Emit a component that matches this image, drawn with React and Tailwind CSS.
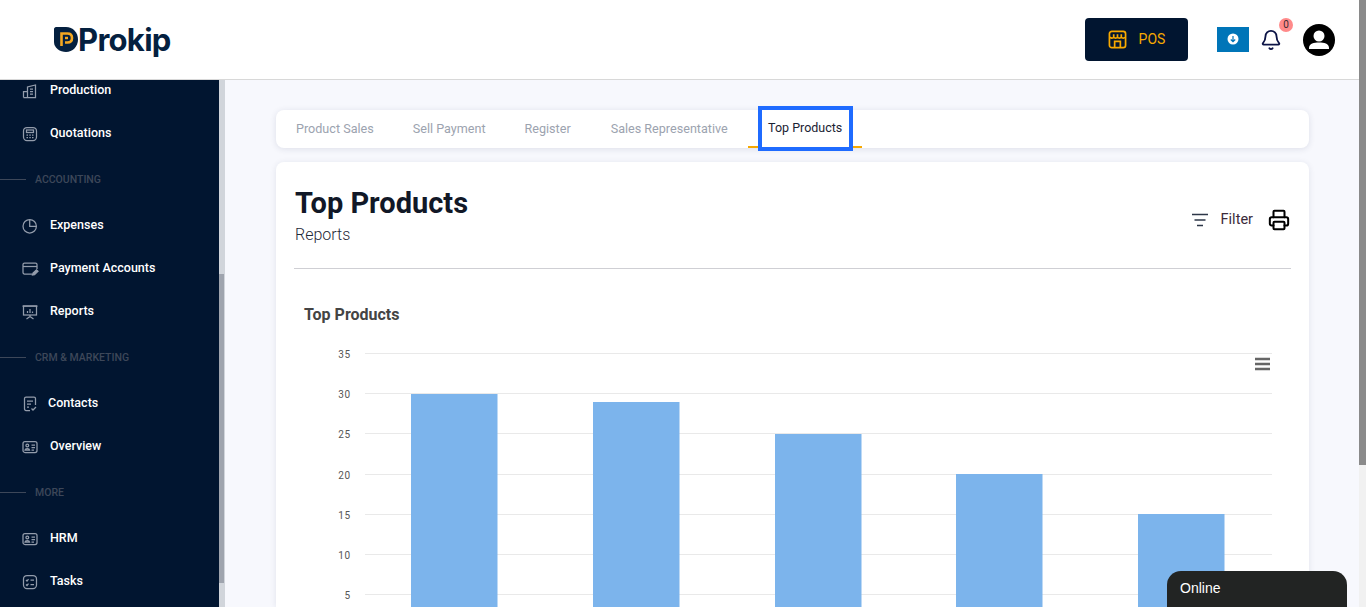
import React from 'react';
import { Bell, Printer } from 'lucide-react';

const ROBOTO = "font-['Roboto',sans-serif]";

const Icon = ({ children }) => (
  <svg width="18" height="18" viewBox="0 0 18 18" fill="none" stroke="#939cab" strokeWidth="1.25" className="shrink-0">
    {children}
  </svg>
);

const ProductionIcon = () => (
  <Icon>
    <path d="M2.5 15.5V9.5H6.5V15.5M6.5 15.5V5L14.5 3V15.5H2.5M9 7H12M9 9.5H12M9 12H12" />
  </Icon>
);
const CalcIcon = () => (
  <Icon>
    <rect x="2.5" y="2.5" width="13" height="13" rx="3.5" />
    <rect x="5.5" y="5" width="7" height="2.5" />
    <path d="M5.5 10H7M8.3 10H9.8M11 10H12.5M5.5 12.5H7M8.3 12.5H9.8M11 12.5H12.5" />
  </Icon>
);
const PieIcon = () => (
  <Icon>
    <circle cx="8.7" cy="9.3" r="6.7" />
    <path d="M8.7 2.6V9.3H15.4" />
  </Icon>
);
const CardIcon = () => (
  <Icon>
    <path d="M11 14H3.5A1.5 1.5 0 0 1 2 12.5V4.5A1.5 1.5 0 0 1 3.5 3H14.5A1.5 1.5 0 0 1 16 4.5V9" />
    <path d="M2 6.5H16" />
    <path d="M11.5 15L12 13L15.5 9.8L17 11.2L13.5 14.6Z" fill="#939cab" />
  </Icon>
);
const BoardIcon = () => (
  <Icon>
    <rect x="2.5" y="3" width="13" height="9" />
    <path d="M1.5 3H16.5M9 12V14M5.5 16L9 13.5L12.5 16M6.5 10V8M9 10V6M11.5 10V8.5" />
  </Icon>
);
const NoteIcon = () => (
  <Icon>
    <path d="M9 15.5H5A1.5 1.5 0 0 1 3.5 14V3.5A1.5 1.5 0 0 1 5 2H13A1.5 1.5 0 0 1 14.5 3.5V10" />
    <path d="M6 6H12M6 9H10M6 12H8M10.5 13.5L12 15L15 12" />
  </Icon>
);
const IdIcon = () => (
  <Icon>
    <rect x="2" y="3.5" width="14" height="11" rx="2" />
    <circle cx="6.3" cy="7.5" r="1.4" />
    <path d="M4 12C4.3 10 8.3 10 8.6 12H4ZM10.5 7H14M10.5 9.5H14M10.5 12H13" />
  </Icon>
);
const TasksIcon = () => (
  <Icon>
    <rect x="2.5" y="2.5" width="13" height="13" rx="3.5" />
    <path d="M5 7L6 8L7.5 6M5 11.5L6 12.5L7.5 10.5M9.5 7H13M9.5 11.5H13" />
  </Icon>
);

const NavItem = ({ icon, label, gap = 'gap-[11px]' }) => (
  <div className={`h-[43px] pl-[21px] flex items-center ${gap} text-[12.5px] font-medium text-white`}>
    {icon}
    <span>{label}</span>
  </div>
);

const NavSection = ({ label }) => (
  <div className="h-[49px] flex items-center gap-[9px] text-[10.5px] font-medium text-[#3d4759]">
    <div className="w-[26px] h-px bg-[#3d4759]" />
    <span>{label}</span>
  </div>
);

const Sidebar = () => (
  <div className="w-[225px] shrink-0 flex overflow-hidden bg-[#011530]">
    <div className="w-[219px] shrink-0 -mt-[11px]">
      <NavItem icon={<ProductionIcon />} label="Production" />
      <NavItem icon={<CalcIcon />} label="Quotations" />
      <NavSection label="ACCOUNTING" />
      <NavItem icon={<PieIcon />} label="Expenses" />
      <NavItem icon={<CardIcon />} label="Payment Accounts" />
      <NavItem icon={<BoardIcon />} label="Reports" />
      <NavSection label="CRM & MARKETING" />
      <NavItem icon={<NoteIcon />} label="Contacts" gap="gap-[9px]" />
      <NavItem icon={<IdIcon />} label="Overview" />
      <NavSection label="MORE" />
      <NavItem icon={<IdIcon />} label="HRM" />
      <NavItem icon={<TasksIcon />} label="Tasks" />
    </div>
    <div className="w-[6px] bg-[#d1d5db] pt-[194px]">
      <div className="h-[309px] w-[5px] bg-[#9fa4ae]" />
    </div>
  </div>
);

const Logo = () => (
  <div className="flex items-center">
    <svg width="24" height="25" viewBox="0 0 24 25" className="shrink-0">
      <path d="M2 0H12C19 0 24 5.5 24 12.5C24 19.5 18.5 25 12 25C6 25 0 21 0 15V2C0 1 1 0 2 0Z" fill="#04203f" />
      <path d="M7.5 19V6.5H13.5C16.5 6.5 18 8.5 18 11C18 13.5 16.5 15.5 13.5 15.5H11" fill="none" stroke="#f4a821" strokeWidth="2.6" />
      <path d="M11 11H14" stroke="#f4a821" strokeWidth="2.4" />
    </svg>
    <span className="text-[31px] leading-none font-bold tracking-[-0.7px] text-[#04203f] font-['Inter',sans-serif]">Prokip</span>
  </div>
);

const Header = () => (
  <div className="h-[80px] shrink-0 bg-white border-b border-[#d8d8d8] flex items-center pl-[54px]">
    <Logo />
    <div className="ml-auto flex items-center">
      <div className="w-[103px] h-[43px] bg-[#011530] rounded-[4px] flex items-center justify-center gap-[12px] text-[14px] text-[#f7a900] mr-[1px]">
        <svg width="19" height="19" viewBox="0 0 20 20" fill="none" stroke="#f7a900" strokeWidth="1.8">
          <rect x="1.5" y="1.5" width="17" height="17" rx="2.5" />
          <path d="M2 7.5C3.5 9 5 9 6 7.5C7 9 9 9 10 7.5C11 9 13 9 14 7.5C15 9 17 9 18 7.5M6 4.5V7M10 4.5V7M14 4.5V7M7 18V12H13V18" />
        </svg>
        <span>POS</span>
      </div>
      <div className="w-[32px] h-[25px] ml-[28px] bg-[#0075b8] flex items-center justify-center -mt-[1px]">
        <svg width="12" height="12" viewBox="0 0 12 12">
          <circle cx="6" cy="6" r="5.5" fill="#fff" />
          <path d="M6 3V8.5M3.8 6.5L6 8.7L8.2 6.5" fill="none" stroke="#0075b8" strokeWidth="1.2" />
        </svg>
      </div>
      <div className="relative ml-[11px] mt-[1px]">
        <Bell size={22} color="#0c1446" strokeWidth={2} />
        <span className="absolute -top-[11px] left-[19px] w-[14px] h-[14px] rounded-full bg-[#ff8a8a] text-[10px] leading-[14px] text-center text-[#3a2a30]">0</span>
      </div>
      <div className="w-[32px] h-[32px] ml-[21px] mr-[24px] rounded-full bg-black overflow-hidden">
        <svg width="32" height="32" viewBox="0 0 32 32" fill="#fff">
          <circle cx="16" cy="12" r="5.5" />
          <path d="M6 24C6 19.5 11 18.5 16 18.5C21 18.5 26 19.5 26 24V25H6Z" />
        </svg>
      </div>
    </div>
  </div>
);

const Tabs = () => (
  <div className="h-[38px] bg-white rounded-[8px] shadow-[0_1px_6px_rgba(30,40,80,0.12)] flex items-center pl-[20px] text-[12.6px] text-[#9ca3af]">
    <span>Product Sales</span>
    <span className="ml-[39px]">Sell Payment</span>
    <span className="ml-[39px]">Register</span>
    <span className="ml-[40px]">Sales Representative</span>
    <div className="relative ml-[20px] w-[114px] h-[38px] border-b-2 border-[#f7a900]">
      <span className="absolute -top-[4px] left-[10px] w-[95px] h-[45px] border-[4px] border-[#1f6bff] bg-white flex items-center justify-center text-[12.5px] text-[#1a2233] pb-[1px]">Top Products</span>
    </div>
  </div>
);

const ticks = [35, 30, 25, 20, 15, 10, 5];
const bars = [
  { x: 411, top: 394 },
  { x: 593, top: 402 },
  { x: 775, top: 434 },
  { x: 956, top: 474 },
  { x: 1138, top: 514 },
];

// viewBox uses the page's own coordinates, the chart sits right below its title
const Chart = () => (
  <svg width="1033" height="282" viewBox="276 325 1033 282" className="block">
    {ticks.map((t, i) => {
      const y = Math.round(353 + i * 40.2);
      return (
        <g key={t}>
          <line x1="365" x2="1272" y1={y + 0.5} y2={y + 0.5} stroke="#e9e9e9" />
          <text x="351" y={y + 4.5} textAnchor="end" fontSize="10" letterSpacing="0.8" fill="#555" fontFamily="Roboto, sans-serif">{t}</text>
        </g>
      );
    })}
    {bars.map((b) => (
      <rect key={b.x} x={b.x} y={b.top} width="86.5" height={607 - b.top} fill="#7cb4ec" />
    ))}
    <path d="M1255 359H1270M1255 364H1270M1255 369H1270" stroke="#666" strokeWidth="2.4" />
  </svg>
);

const ReportCard = () => (
  <div className="mt-[14px] flex-1 bg-white rounded-t-[8px] shadow-[0_1px_6px_rgba(30,40,80,0.1)] overflow-hidden">
    <div className="h-[107px] mx-[18px] px-px border-b border-[#cfcfd4] flex items-start justify-between">
      <div className="pt-[22px]">
        <h1 className="text-[29px] leading-[39px] font-bold text-[#111827]">Top Products</h1>
        <p className="text-[16px] leading-[24px] font-light text-[#1f2937]">Reports</p>
      </div>
      <div className="flex items-center pt-[47px] text-[14.5px] text-[#3b2a3a]">
        <svg width="18" height="14" viewBox="0 0 18 14" fill="none" stroke="#2d3748" strokeWidth="1.7" className="-ml-px">
          <path d="M1 1.5H17M3.5 7H14.5M6 12.5H12" />
        </svg>
        <span className="ml-[12px]">Filter</span>
        <Printer size={22} color="#000" strokeWidth={2.2} className="ml-[15px]" />
      </div>
    </div>
    <div className="pl-[28px] pt-[36px] text-[16px] leading-[20px] font-bold text-[#444]">Top Products</div>
    <Chart />
  </div>
);

export default function App() {
  return (
    <div className={`relative h-[607px] w-full overflow-hidden flex ${ROBOTO}`}>
      <div className="flex-1 min-w-0 flex flex-col">
        <Header />
        <div className="flex-1 min-h-0 flex">
          <Sidebar />
          <div className="flex-1 min-w-0 bg-[#f7f8fd] pl-[51px] pr-[50px] pt-[30px] flex flex-col">
            <Tabs />
            <ReportCard />
          </div>
        </div>
      </div>
      <div className="w-[7px] shrink-0 bg-[#f1f1f1]">
        <div className="h-[465px] bg-[#8a8a8a]" />
      </div>
      <div className="absolute left-[1167px] bottom-0 w-[180px] h-[36px] rounded-t-[14px] bg-[#222423] pl-[13px] pt-[8px] text-[14px] leading-[18px] text-white font-['Liberation_Sans',sans-serif]">
        Online
      </div>
    </div>
  );
}
